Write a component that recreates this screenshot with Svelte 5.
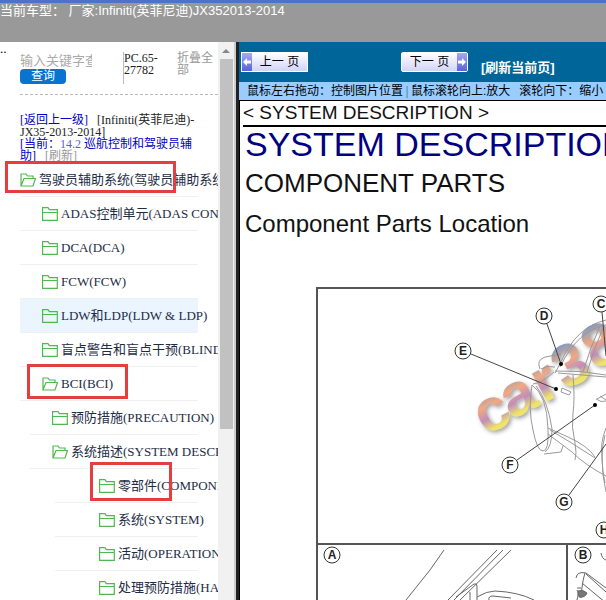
<script>
	const rows = [
		{ label: '驾驶员辅助系统(驾驶员辅助系统)', level: 0, open: true, mark: 'wide' },
		{ label: 'ADAS控制单元(ADAS CONTROL UNIT)', level: 1 },
		{ label: 'DCA(DCA)', level: 1 },
		{ label: 'FCW(FCW)', level: 1 },
		{ label: 'LDW和LDP(LDW & LDP)', level: 1, active: true },
		{ label: '盲点警告和盲点干预(BLIND SPOT)', level: 1 },
		{ label: 'BCI(BCI)', level: 1, open: true, mark: 'mid' },
		{ label: '预防措施(PRECAUTION)', level: 2 },
		{ label: '系统描述(SYSTEM DESCRIPTION)', level: 2, open: true },
		{ label: '零部件(COMPONENT PARTS)', level: 3, mark: 'deep' },
		{ label: '系统(SYSTEM)', level: 3 },
		{ label: '活动(OPERATION)', level: 3 },
		{ label: '处理预防措施(HANDLING)', level: 3 }
	];

	const callouts = [
		{ id: 'A', x: 332, y: 555 },
		{ id: 'B', x: 583, y: 555 },
		{ id: 'C', x: 601, y: 304 },
		{ id: 'D', x: 544, y: 316 },
		{ id: 'E', x: 463, y: 351 },
		{ id: 'F', x: 510, y: 465 },
		{ id: 'G', x: 564, y: 502 },
		{ id: 'H', x: 604, y: 530 }
	];

	// centre of each watermark letter, with the drop to its baseline
	const watermark = [
		{ char: 'c', x: 493, y: 414, drop: 16 },
		{ char: 'a', x: 519, y: 398, drop: 16 },
		{ char: 'r', x: 546, y: 384, drop: 16 },
		{ char: '3', x: 570, y: 364, drop: 21 },
		{ char: '8', x: 600, y: 344, drop: 21 }
	];

	let keyword = $state('');
</script>

<div class="app">
	<header>当前车型： 厂家:Infiniti(英菲尼迪)JX352013-2014</header>

	<div class="frames">
		<aside>
			<span class="dots">..</span>
			<div class="side">
				<div class="tools">
					<form onsubmit={(e) => e.preventDefault()}>
						<input type="text" aria-label="关键字" placeholder="输入关键字查询" bind:value={keyword} />
						<button class="query">查询</button>
					</form>
					<div class="code">PC.65-27782</div>
					<a class="collapse" href="#all">折叠全部</a>
				</div>

				<div class="crumbs">
					<a href="#up">[返回上一级]</a> &nbsp; <span>[Infiniti(英菲尼迪)-JX35-2013-2014]</span><br />
					<a href="#now">[当前：<i>14.2</i> 巡航控制和驾驶员辅助]</a> &nbsp; <a class="muted" href="#reload">[刷新]</a>
				</div>

				<ul>
					{#each rows as row}
						<li class="level{row.level}" class:active={row.active}>
							<a href="#tree">
								<svg width="16" height="14" viewBox="0 0 16 14" aria-hidden="true">
									{#if row.open}
										<path d="M1 12.5V1h5l1.500 2H13v2.500M1 13L4 5.500h11.500L13 13z" />
									{:else}
										<path d="M.6 13.300V.7h5.400l1.300 2h8v10.600zM.6 5.500h14.700" />
									{/if}
								</svg>
								{row.label}
							</a>
							{#if row.mark}
								<span class="mark {row.mark}"></span>
							{/if}
						</li>
					{/each}
				</ul>
			</div>
			<div class="scrollbar">
				<svg width="16" height="17" viewBox="0 0 16 17" aria-hidden="true">
					<path d="M4 11l4-4 4 4z" fill="#888" />
				</svg>
				<div class="thumb"></div>
			</div>
		</aside>

		<main>
			<nav>
				<button class="page prev"><b>
					<svg width="10" height="18" viewBox="0 0 10 18" aria-hidden="true"><path d="M1 9l4-4v2.500h4v3H5V13z" fill="#fff" /></svg>
				</b><span>上一 页</span></button>
				<button class="page next"><span>下一 页</span><b>
					<svg width="10" height="18" viewBox="0 0 10 18" aria-hidden="true"><path d="M9 9L5 5v2.500H1v3h4V13z" fill="#fff" /></svg>
				</b></button>
				<a href="#page">[刷新当前页]</a>
			</nav>
			<p class="help">
				<span>鼠标左右拖动：控制图片位置</span><i>|</i><span>鼠标滚轮向上:放大</span>
				<span class="down">滚轮向下：缩小</span>
			</p>

			<article>
				<p class="section">&lt; SYSTEM DESCRIPTION &gt;</p>
				<h1>SYSTEM DESCRIPTION</h1>
				<h2>COMPONENT PARTS</h2>
				<h3>Component Parts Location</h3>

				<svg class="diagram" viewBox="240 243 366 357" preserveAspectRatio="xMinYMin slice">
					<defs>
						<linearGradient id="rainbow" x1="0" y1="0" x2="0" y2="1">
							<stop offset="0.18" stop-color="#6f8bb8" />
							<stop offset="0.42" stop-color="#f09a6c" />
							<stop offset="0.6" stop-color="#b57bb0" />
							<stop offset="0.76" stop-color="#ece050" />
						</linearGradient>
						<filter id="shade" x="-10%" y="-10%" width="130%" height="130%">
							<feDropShadow dx="2" dy="2" stdDeviation="2" flood-color="#444" flood-opacity="0.6" />
						</filter>
					</defs>

					<g class="watermark" filter="url(#shade)">
						{#each watermark as w}
							<text transform="translate({w.x} {w.y}) rotate(-28)" y={w.drop}>{w.char}</text>
						{/each}
					</g>

					<!-- table frame -->
					<path class="frame" d="M610 288H317v320M317 544h293M567 544v60" />

					<!-- car body -->
					<g class="car">
						<path d="M606 320q-30 7-45 42l-6 11M606 325q-28 5-46 42M600 326q-10 22-17 46M604 326q-10 22-17 46" />
						<path d="M540 369q-4-9 5-12l16-3M541 369q6-4 14-2M555 371q25-1 51 4M558 373l48 4" />
						<path d="M554 372q-12 11-21 12M573 375q2 24 0 38-2 14 2 30 2 10 0 17M562 388l9 4-2 3-8-3z" />
						<path d="M532 385q-4 24 1 45 4 21 10 21 6 0 5-22-1-34-16-44zM536 386q12 15 16 43 0 18-7 23" />
						<path d="M544 454l17-2 2-6M548 428l20 9q20 9 27 20M548 434l24 18q13 13 34 24M550 430l20 12 25 16" />
						<path d="M597 399l9-5M596 399q5 4 10 2M600 396l6 4M606 428q-6 15-4 28 0 20 4 36" />
						<path d="M605 435q-6 22 0 48" />
					</g>

					<!-- door detail -->
					<g class="car dark">
						<path d="M430 570l14-20M406 600l24-30M448 600l49-50M454 600l49-50M460 600l51-50M456 597l18-13q3-1 3 2v14M470 592v8" />
						<path d="M477 597q10-6 18-6 23 1 39 9M489 600q-1-4 4-4l18 2M601 553q1 6 5 7" />
						<path d="M576 578q1-7 10-5l20 15M585 573q-3 9-4 25M586 574l20 18M582 583l24 20M577 588h4M577 600q2-8 0-10" />
						<path d="M578 591q5-2 9 2-2 5-8 4z" fill="#777" />
					</g>

					<path class="lead" d="M547 324l14 40M471 354l85 35M517 460l78-55M569 495l37-51M602 312l4 44" />
					<circle cx="561" cy="364" r="2" />
					<circle cx="556" cy="389" r="2" />
					<circle cx="595" cy="405" r="2" />

					{#each callouts as c}
						<circle class="ring" cx={c.x} cy={c.y} r="8" />
						<text class="letter" x={c.x} y={c.y + 4}>{c.id}</text>
					{/each}
				</svg>
			</article>
		</main>
	</div>
</div>

<style>
	:global(body) {
		margin: 0;
		background: #fff;
	}

	.app {
		display: flex;
		flex-direction: column;
		height: 100vh;
		overflow: hidden;
		font-family: 'Liberation Serif', 'Noto Sans CJK SC', serif;
		font-size: 13px;
	}

	a {
		color: inherit;
		text-decoration: none;
	}

	header {
		box-sizing: border-box;
		flex: none;
		height: 42px;
		border-top: 3px solid #4c73c4;
		background: #999;
		color: #fff;
		font: 13px/15px 'Liberation Sans', 'Noto Sans CJK SC', sans-serif;
		white-space: pre;
	}

	.frames {
		display: flex;
		flex: 1;
		min-height: 0;
	}

	aside {
		display: flex;
		flex: none;
		width: 234px;
		border-right: 2px solid #ccc;
	}

	.dots {
		flex: none;
		width: 20px;
		line-height: 13px;
	}

	.side {
		flex: 1;
		min-width: 0;
		font-size: 12px;
	}

	.tools {
		display: flex;
		align-items: flex-start;
		height: 42px;
		padding-top: 10px;
		border-bottom: 1px dashed #bbb;
		line-height: 12px;
	}

	form {
		display: flex;
		flex-direction: column;
		align-items: flex-start;
		width: 103px;
	}

	input {
		width: 72px;
		height: 17px;
		padding: 0;
		border: 0;
		outline: 0;
		background: none;
		font: 13px/17px 'Liberation Sans', 'Noto Sans CJK SC', sans-serif;
	}

	input::placeholder {
		color: #aaa;
	}

	.query {
		width: 46px;
		height: 15px;
		padding: 0;
		border: 0;
		border-radius: 4px;
		background: #0874cf;
		color: #fff;
		font: 12px/15px 'Liberation Sans', 'Noto Sans CJK SC', sans-serif;
	}

	.code {
		width: 53px;
		height: 32px;
		border-left: 1px solid #bbb;
		color: #222;
	}

	.collapse {
		width: 40px;
		color: #999;
	}

	.crumbs {
		width: 178px;
		height: 49px;
		padding-top: 19px;
		color: #222;
		line-height: 12px;
	}

	.crumbs a {
		color: #0000c8;
	}

	.crumbs i {
		color: #5b5be0;
		font-style: normal;
	}

	.crumbs .muted {
		color: #999;
	}

	ul {
		margin: 0;
		padding: 0;
		list-style: none;
	}

	li {
		position: relative;
		box-sizing: border-box;
		width: 178px;
		height: 34px;
		border-bottom: 1px solid #f0f0f0;
		color: #1e2d46;
		font-size: 13px;
		line-height: 33px;
	}

	li a {
		display: flex;
		align-items: center;
		gap: 3px;
		width: 198px;
		overflow: hidden;
		white-space: nowrap;
	}

	li svg {
		flex: none;
		fill: none;
		stroke: #4fb84f;
		stroke-width: 1.2;
	}

	.level1 a {
		box-sizing: border-box;
		padding-left: 22px;
	}

	.level2 {
		width: 168px;
		margin-left: 10px;
	}

	.level2 a {
		box-sizing: border-box;
		width: 188px;
		padding-left: 22px;
	}

	.level3 {
		width: 143px;
		margin-left: 35px;
	}

	.level3 a {
		box-sizing: border-box;
		width: 163px;
		padding-left: 44px;
	}

	.active {
		background: #eaf5ff;
	}

	.mark {
		position: absolute;
		box-sizing: border-box;
		border: 3px solid #e53e3e;
		pointer-events: none;
	}

	.wide {
		top: -2px;
		left: -15px;
		width: 171px;
		height: 32px;
	}

	.mid {
		top: -3px;
		left: 7px;
		width: 101px;
		height: 35px;
	}

	.deep {
		top: -7px;
		left: 35px;
		width: 82px;
		height: 39px;
	}

	.scrollbar {
		flex: none;
		width: 16px;
		background: #f1f1f1;
	}

	.scrollbar svg {
		display: block;
	}

	.thumb {
		width: 13px;
		height: 370px;
		margin-left: 2px;
		background: #c1c1c1;
	}

	main {
		flex: 1;
		min-width: 0;
		border-left: 3px solid #222;
		overflow: hidden;
	}

	nav {
		display: flex;
		align-items: flex-start;
		height: 30px;
		padding: 10px 0 0 2px;
		background: #069;
		color: #fff;
		font: bold 13px/32px 'Liberation Sans', 'Noto Sans CJK SC', sans-serif;
		white-space: nowrap;
	}

	.page {
		display: flex;
		flex: none;
		align-items: center;
		box-sizing: border-box;
		width: 67px;
		height: 20px;
		padding: 0;
		border: 1px solid #fff;
		background: linear-gradient(#fff, #d2d4f8);
		color: #000;
		font: 12px/18px 'Liberation Sans', 'Noto Sans CJK SC', sans-serif;
	}

	.page span {
		flex: 1;
	}

	.page b {
		flex: none;
		width: 10px;
		height: 18px;
		background: linear-gradient(#a6aaf4, #5862dc);
	}

	.page svg {
		display: block;
	}

	.prev {
		margin-right: 93px;
	}

	.next {
		margin-right: 13px;
		border-radius: 2px;
	}

	.help {
		display: flex;
		height: 18px;
		margin: 0;
		padding-left: 8px;
		border-bottom: 1px solid #000;
		background: #9cf;
		color: #000;
		font: 12px/19px 'Liberation Sans', 'Noto Sans CJK SC', sans-serif;
		white-space: nowrap;
	}

	.help i {
		width: 8px;
		color: #5b86ad;
		font-style: normal;
		text-align: center;
	}

	.down {
		margin-left: 9px;
	}

	article {
		border-left: 1px solid #000;
		background: #fff;
		color: #111;
		font-family: 'Liberation Sans', sans-serif;
		white-space: nowrap;
	}

	.section {
		margin: 0 0 0 3px;
		border-bottom: 2px solid #000;
		font-size: 19px;
		line-height: 24px;
	}

	h1,
	h2,
	h3 {
		margin: 0 0 0 5px;
		font-weight: normal;
	}

	h1 {
		color: #000080;
		font-size: 34px;
		line-height: 34px;
	}

	h2 {
		font-size: 26px;
		line-height: 44px;
	}

	h3 {
		font-size: 24px;
		line-height: 38px;
	}

	.diagram {
		display: block;
		width: 100%;
		height: 357px;
	}

	.frame {
		fill: none;
		stroke: #555;
		stroke-width: 2;
	}

	.car {
		fill: none;
		stroke: #999;
		stroke-width: 1;
	}

	.dark {
		stroke: #666;
	}

	.lead {
		fill: none;
		stroke: #444;
	}

	.ring {
		fill: #fff;
		stroke: #333;
	}

	.letter {
		fill: #222;
		font-size: 12px;
		font-weight: bold;
		text-anchor: middle;
	}

	.watermark {
		fill: url(#rainbow);
		font-size: 60px;
		font-weight: bold;
		text-anchor: middle;
		opacity: 0.85;
	}
</style>
